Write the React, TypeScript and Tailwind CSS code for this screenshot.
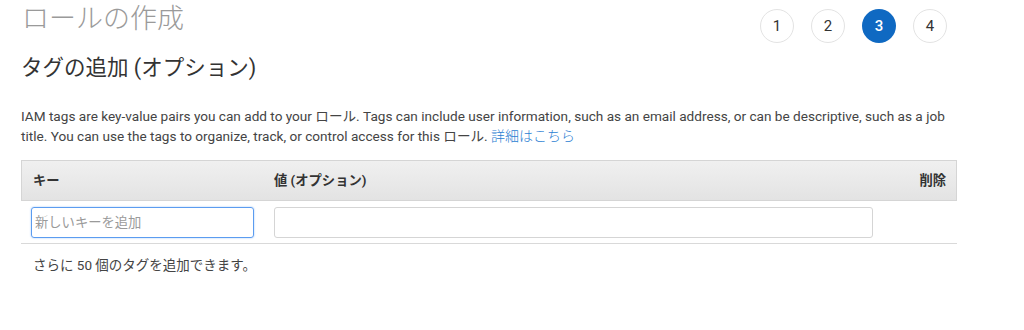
import { useState } from "react";

const FONT = {
  fontFamily: 'Roboto, "Noto Sans CJK JP", "Liberation Sans", sans-serif',
};

const STEPS = [1, 2, 3, 4];

function Steps({ current }: { current: number }) {
  return (
    <div className="flex gap-[17px] pt-[9px] pr-[10px]">
      {STEPS.map((s) => (
        <div
          key={s}
          className={
            s === current
              ? "h-[34px] w-[34px] rounded-full bg-[#0f69c2] text-white flex items-center justify-center text-[15px] font-medium"
              : "h-[34px] w-[34px] rounded-full border border-[#e3e3e3] bg-white text-[#333] flex items-center justify-center text-[15px]"
          }
        >
          {s}
        </div>
      ))}
    </div>
  );
}

export default function App() {
  const [key, setKey] = useState("");
  const [value, setValue] = useState("");

  return (
    <div className="w-[1024px] h-[330px] bg-white overflow-hidden" style={FONT}>
      <div className="w-[936px] ml-[21px]">
        <div className="flex justify-between items-start">
          <h1 className="text-[27px] leading-[34px] text-[#9a9a9a] font-light pt-[2px] ml-[1px]">
            ロールの作成
          </h1>
          <Steps current={3} />
        </div>

        <h2 className="text-[21.5px] leading-[28px] text-[#333] mt-[11px]">
          タグの追加 (オプション)
        </h2>

        <p className="text-[13.6px] leading-[19.5px] text-[#444] mt-[25px]">
          IAM tags are key-value pairs you can add to your ロール. Tags can include user
          information, such as an email address, or can be descriptive, such as a job title. You
          can use the tags to organize, track, or control access for this ロール.{" "}
          <a href="#" className="text-[#2a7ed2] font-light text-[14px]">
            詳細はこちら
          </a>
        </p>

        <div className="mt-[14px]">
          <div className="h-[41px] flex items-center border border-[#d5d5d5] bg-gradient-to-b from-[#f0f0f0] to-[#e3e3e3] text-[13.3px] font-bold text-[#333]">
            <div className="w-[252px] pl-[11px]">キー</div>
            <div className="flex-1">値 (オプション)</div>
            <div className="pr-[10px]">削除</div>
          </div>
          <div className="flex items-center gap-[20px] pl-[10px] pt-[6px] pb-[5px] border-b border-[#d9d9d9]">
            <input
              value={key}
              onChange={(e) => setKey(e.target.value)}
              placeholder="新しいキーを追加"
              className="w-[223px] h-[31px] rounded-[3px] border border-[#5b9cf0] shadow-[0_0_2px_#9cc4f5] px-[3px] text-[13.3px] text-[#333] placeholder:text-[#9a9a9a] outline-none"
              style={FONT}
            />
            <input
              value={value}
              onChange={(e) => setValue(e.target.value)}
              className="w-[599px] h-[31px] rounded-[3px] border border-[#d5d5d5] px-[6px] text-[13px] outline-none"
              style={FONT}
            />
          </div>
          <p className="text-[13.5px] text-[#444] pl-[12px] mt-[11px]">
            さらに 50 個のタグを追加できます。
          </p>
        </div>
      </div>
    </div>
  );
}
